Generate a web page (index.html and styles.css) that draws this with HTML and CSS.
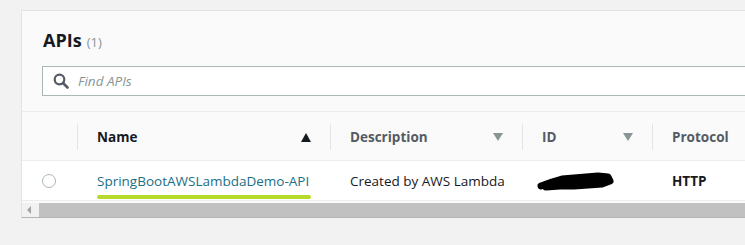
FILE: index.html
```html
<!DOCTYPE html>
<html lang="en">

<head>
    <meta charset="UTF-8">
    <meta name="viewport" content="width=device-width, initial-scale=1.0">
    <title>APIs</title>
    <link rel="stylesheet" href="styles.css">
</head>

<body>
    <div class="panel">
        <div class="panel-head">
            <h2 class="title">APIs <span class="count">(1)</span></h2>
            <div class="search">
                <svg class="search-icon" width="16" height="16" viewBox="0 0 16 16">
                    <circle cx="6.5" cy="6.5" r="4.8" fill="none" stroke="#545b64" stroke-width="2.2"/>
                    <line x1="10" y1="10" x2="14.5" y2="14.5" stroke="#545b64" stroke-width="2.6" stroke-linecap="round"/>
                </svg>
                <span class="placeholder">Find APIs</span>
            </div>
        </div>

        <div class="table">
            <div class="row head-row">
                <div class="cell col-select"></div>
                <div class="cell col-name">
                    <div class="th sorted"><span>Name</span><span class="sort-up"></span></div>
                </div>
                <div class="cell col-desc">
                    <div class="th"><span>Description</span><span class="sort-down"></span></div>
                </div>
                <div class="cell col-id">
                    <div class="th"><span>ID</span><span class="sort-down"></span></div>
                </div>
                <div class="cell col-proto">
                    <div class="th"><span>Protocol</span></div>
                </div>
            </div>

            <div class="row body-row">
                <div class="cell col-select"><span class="radio"></span></div>
                <div class="cell col-name td">
                    <a class="api-link" href="#">SpringBootAWSLambdaDemo-API</a>
                    <span class="marker"></span>
                </div>
                <div class="cell col-desc td">Created by AWS Lambda</div>
                <div class="cell col-id td">
                    <!-- id blacked out -->
                    <svg width="80" height="20" viewBox="0 0 80 20">
                        <path d="M5 15 L16 11 L26 8 L38 7 L50 6 L62 5 L72 6 L74 10 L66 13 L52 14 L38 15 L24 15 L10 16" fill="#000" stroke="#000" stroke-width="7" stroke-linejoin="round" stroke-linecap="round"/>
                    </svg>
                </div>
                <div class="cell col-proto td strong">HTTP</div>
            </div>
        </div>

        <div class="hscroll">
            <span class="arrow"></span>
            <span class="thumb"></span>
        </div>
    </div>
</body>

</html>
```

FILE: styles.css
```css
* {
    box-sizing: border-box;
}

body {
    margin: 0;
    padding: 10px 0 0 21px;
    background: #f2f2f2;
    font-family: "Open Sans", "Noto Sans", sans-serif;
    color: #16191f;
    overflow: hidden;
}

.panel {
    width: 900px;
    background: #fafafa;
    border: 1px solid #e3e3e3;
    border-bottom: 1px solid #b4b4b4;
}

.panel-head {
    padding: 19px 0 15px 20px;
    border-bottom: 1px solid #eaeded;
}

.title {
    display: flex;
    align-items: baseline;
    gap: 5px;
    height: 20px;
    margin: 0 0 16px 1px;
    font-size: 18px;
    line-height: 20px;
    font-weight: 700;
}

.count {
    font-size: 13px;
    font-weight: 400;
    color: #879596;
}

.search {
    display: flex;
    align-items: center;
    height: 30px;
    border: 1px solid #aab7b8;
    background: #fff;
    padding-left: 10px;
}

.search-icon {
    margin-right: 9px;
}

.placeholder {
    font-style: italic;
    font-size: 13.5px;
    color: #879596;
}

.row {
    display: flex;
}

.col-select {
    width: 55px;
    flex: none;
}

.col-name {
    width: 253px;
    flex: none;
}

.col-desc {
    width: 192px;
    flex: none;
}

.col-id {
    width: 130px;
    flex: none;
}

.col-proto {
    width: 200px;
    flex: none;
}

.head-row {
    height: 49px;
    border-bottom: 1px solid #eaeded;
}

.th {
    display: flex;
    align-items: center;
    justify-content: space-between;
    height: 26px;
    margin-top: 12px;
    padding: 0 19px;
    border-left: 1px solid #e5e5e5;
    font-size: 13.5px;
    font-weight: 700;
    color: #545b64;
}

.th.sorted {
    color: #16191f;
}

.sort-up {
    width: 0;
    height: 0;
    border-left: 5.5px solid transparent;
    border-right: 5.5px solid transparent;
    border-bottom: 9px solid #16191f;
}

.sort-down {
    width: 0;
    height: 0;
    border-left: 5px solid transparent;
    border-right: 5px solid transparent;
    border-top: 8px solid #879596;
}

.body-row {
    height: 40px;
    background: #fff;
    border-bottom: 1px solid #eaeded;
}

.body-row .cell {
    display: flex;
    align-items: center;
}

.td {
    padding-left: 20px;
    font-size: 13.5px;
}

.col-id.td {
    padding-left: 14px;
}

.strong {
    font-weight: 700;
}

.radio {
    width: 14px;
    height: 14px;
    margin-left: 20px;
    border: 1px solid #aab7b8;
    border-radius: 50%;
    background: #fff;
}

.col-name.td {
    position: relative;
}

.api-link {
    color: #1a6f86;
    text-decoration: none;
}

.marker {
    position: absolute;
    left: 20px;
    top: 34px;
    width: 214px;
    height: 4px;
    border-radius: 3px;
    background: #b7d92c;
}

.hscroll {
    display: flex;
    height: 14px;
    margin-top: 2px;
    background: #f1f1f1;
}

.arrow {
    width: 0;
    height: 0;
    margin: 3px 6px 0 5px;
    border-top: 4px solid transparent;
    border-bottom: 4px solid transparent;
    border-right: 4px solid #a3a3a3;
}

.thumb {
    flex: 1;
    margin-left: 2px;
    background: #c1c1c1;
}
```
